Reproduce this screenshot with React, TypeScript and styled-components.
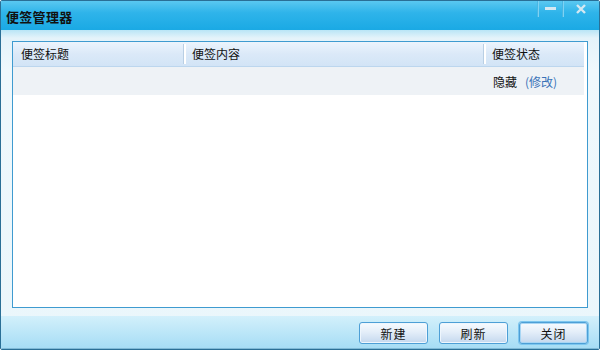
import React from 'react'
import styled, { createGlobalStyle } from 'styled-components'

const GlobalStyle = createGlobalStyle`
  html, body { margin: 0; padding: 0; background: #fff; }
  body { font-family: 'Noto Sans CJK SC', 'Liberation Sans', sans-serif; }
`

const Window = styled.div`
  box-sizing: border-box;
  width: 600px;
  height: 350px;
  border: 1px solid #2a6f96;
  border-radius: 2px;
  display: flex;
  flex-direction: column;
  overflow: hidden;
`

const TitleBar = styled.div`
  height: 29px;
  display: flex;
  align-items: center;
  justify-content: space-between;
  background: linear-gradient(#5ac8f1, #2fb4ea 40%, #1aa9e4);
  padding-left: 5px;
`

const Title = styled.div`
  font-size: 13px;
  font-weight: bold;
  color: #111;
  letter-spacing: 0.3px;
  margin-top: 1px;
`

const Controls = styled.div`
  display: flex;
  align-self: flex-start;
  height: 16px;
`

const CtrlBtn = styled.div<{ $w: number }>`
  width: ${p => p.$w}px;
  height: 16px;
  display: flex;
  align-items: center;
  justify-content: center;
  border-left: 1px solid #49b6e3;
  box-shadow: inset 1px 0 0 #7fd2f3;
`

const Body = styled.div`
  flex: 1;
  display: flex;
  flex-direction: column;
  background: linear-gradient(#b9e5f6, #e4f3fa 8px, #eff8fc 40px, #eaf6fb);
  padding: 11px 11px 0 11px;
`

const ListBox = styled.div`
  height: 265px;
  border: 1px solid #3f9bd0;
  background: #fff;
  display: flex;
  flex-direction: column;
`

const HeaderRow = styled.div`
  display: grid;
  grid-template-columns: 171px 300px 100px;
  height: 24px;
  background: linear-gradient(#ecf4fd, #dbe9f8 50%, #d2e4f6);
  border-bottom: 1px solid #bcd6ee;
  width: 571px;
`

const HeaderCell = styled.div<{ $sep?: boolean }>`
  font-size: 12px;
  color: #111;
  display: flex;
  align-items: center;
  padding-left: ${p => (p.$sep ? 6 : 8)}px;
  border-left: ${p => (p.$sep ? '2px solid #fff' : 'none')};
  box-shadow: ${p => (p.$sep ? '-1px 0 0 #b9cfe4' : 'none')};
  margin: ${p => (p.$sep ? '2px 0' : '0')};
  line-height: 1;
`

const DataRow = styled.div`
  display: grid;
  grid-template-columns: 171px 300px 100px;
  height: 28px;
  background: #eef2f6;
  width: 571px;
`

const Cell = styled.div`
  font-size: 12px;
  color: #111;
  display: flex;
  align-items: center;
  padding-left: 9px;
`

const Link = styled.span`
  color: #3a72b8;
  margin-left: 8px;
`

const Footer = styled.div`
  margin: 8px -11px 0;
  flex: 1;
  background: linear-gradient(#d3f0fb, #a6ddf5);
  display: flex;
  justify-content: flex-end;
  align-items: flex-start;
  gap: 11px;
  padding: 6px 11px 0 0;
  border-bottom: 1px solid #7fb9d6;
`

const Button = styled.div<{ $focus?: boolean }>`
  box-sizing: border-box;
  width: 69px;
  height: 22px;
  border: 1px solid #4d9fd6;
  border-radius: 3px;
  background: linear-gradient(#f7fbfe, #e4eef9 45%, #c4d8ee);
  font-size: 12px;
  color: #111;
  display: flex;
  align-items: center;
  justify-content: center;
  letter-spacing: 1px;
  box-shadow: ${p => (p.$focus ? 'inset 0 0 0 1px #a8d6f4, 0 0 0 1px #7cc6ef' : 'inset 0 0 0 1px #eef6fd')};
`

export default function App() {
  return (
    <>
      <GlobalStyle />
      <Window>
        <TitleBar>
          <Title>便签管理器</Title>
          <Controls>
            <CtrlBtn $w={24}>
              <svg width="11" height="4" viewBox="0 0 11 4">
                <rect x="0" y="0" width="11" height="3" fill="#d4e8f2" />
              </svg>
            </CtrlBtn>
            <CtrlBtn $w={36}>
              <svg width="10" height="10" viewBox="0 0 10 10">
                <path d="M1 1 L9 9 M9 1 L1 9" stroke="#d4e8f2" strokeWidth="2.4" />
              </svg>
            </CtrlBtn>
          </Controls>
        </TitleBar>
        <Body>
          <ListBox>
            <HeaderRow>
              <HeaderCell>便签标题</HeaderCell>
              <HeaderCell $sep>便签内容</HeaderCell>
              <HeaderCell $sep>便签状态</HeaderCell>
            </HeaderRow>
            <DataRow>
              <Cell />
              <Cell />
              <Cell>
                隐藏<Link>(修改)</Link>
              </Cell>
            </DataRow>
          </ListBox>
          <Footer>
            <Button>新建</Button>
            <Button>刷新</Button>
            <Button $focus>关闭</Button>
          </Footer>
        </Body>
      </Window>
    </>
  )
}
